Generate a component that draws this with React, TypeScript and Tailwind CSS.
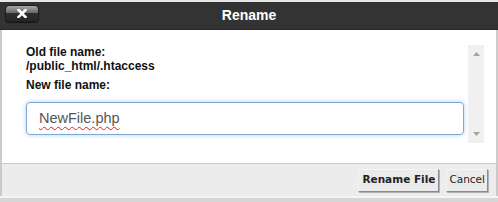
import React from 'react';

function CloseButton() {
  return (
    <button
      className="flex h-[17px] w-[34px] items-center justify-center rounded-[4px] border border-[#1e1e1e] bg-[linear-gradient(to_bottom,#a8a8a8_0%,#6a6a6a_45%,#2e2e2e_50%,#262626_100%)] shadow-[0_1px_1px_rgba(0,0,0,0.6)]"
      title="Close"
    >
      <svg width="10" height="9" viewBox="0 0 10 9">
        <path d="M1.5 1 L8.5 8 M8.5 1 L1.5 8" stroke="#fff" strokeWidth="2.6" strokeLinecap="square" />
      </svg>
    </button>
  );
}

function Scrollbar() {
  return (
    <div className="mt-[15px] flex h-[98px] w-[16px] flex-col items-center justify-between bg-[#f0f0f0] py-[7px]">
      <svg width="7" height="4" viewBox="0 0 7 4">
        <path d="M0 4 L3.5 0 L7 4 Z" fill="#a3a3a3" />
      </svg>
      <svg width="7" height="4" viewBox="0 0 7 4">
        <path d="M0 0 L3.5 4 L7 0 Z" fill="#a3a3a3" />
      </svg>
    </div>
  );
}

export default function App() {
  return (
    <div className="flex h-[202px] w-[498px] flex-col overflow-hidden bg-[#e6e6e6] font-['Liberation_Sans',Arial,sans-serif]">
      <div className="h-[2px] bg-[#e8e8e8]" />

      <div className="grid h-[28px] grid-cols-[1fr_auto_1fr] items-center border-b border-[#2a2a2a] bg-[#333333]">
        <div className="pl-[5px] pb-[5px]">
          <CloseButton />
        </div>
        <span className="text-[14px] font-bold text-white">Rename</span>
        <div />
      </div>

      <div className="flex flex-1 border-l-2 border-r-2 border-[#cccccc] bg-white">
        <div className="flex w-[464px] flex-col pl-[24px] pt-[15px]">
          <div className="text-[12px] font-bold leading-[14px] text-[#111]">Old file name:</div>
          <div className="text-[12px] font-bold leading-[14px] text-[#111]">/public_html/.htaccess</div>
          <div className="mt-[5px] text-[12px] font-bold leading-[14px] text-[#111]">New file name:</div>
          <div className="mt-[10px] flex h-[33px] w-[438px] items-center rounded-[4px] border border-[#7ea9d6] pl-[12px] shadow-[0_0_4px_rgba(102,166,233,0.55)]">
            <span className="text-[14.5px] text-[#555] underline decoration-[#e02020] decoration-wavy decoration-1 underline-offset-[3px]">
              NewFile.php
            </span>
          </div>
        </div>
        <div className="ml-[2px]">
          <Scrollbar />
        </div>
      </div>

      <div className="flex h-[33px] items-center justify-end gap-[7px] border-l-2 border-r-2 border-t border-[#c9c9c9] bg-[#ececec] pr-[8px]">
        <button className="h-[23px] border border-t-[#f4f4f4] border-l-[#f4f4f4] border-b-[#8a8a8a] border-r-[#8a8a8a] bg-[#ebebeb] px-[3px] font-['DejaVu_Sans',Verdana,sans-serif] text-[10.5px] font-bold text-[#222] shadow-[1px_1px_0_#b0b0b0]">
          Rename File
        </button>
        <button className="h-[23px] border border-t-[#f4f4f4] border-l-[#f4f4f4] border-b-[#8a8a8a] border-r-[#8a8a8a] bg-[#ebebeb] px-[2px] font-['DejaVu_Sans',Verdana,sans-serif] text-[10.5px] text-[#222] shadow-[1px_1px_0_#b0b0b0]">
          Cancel
        </button>
      </div>
      <div className="h-[6px] border-t-2 border-[#f4f4f4] bg-[#d6d6d6]" />
    </div>
  );
}
